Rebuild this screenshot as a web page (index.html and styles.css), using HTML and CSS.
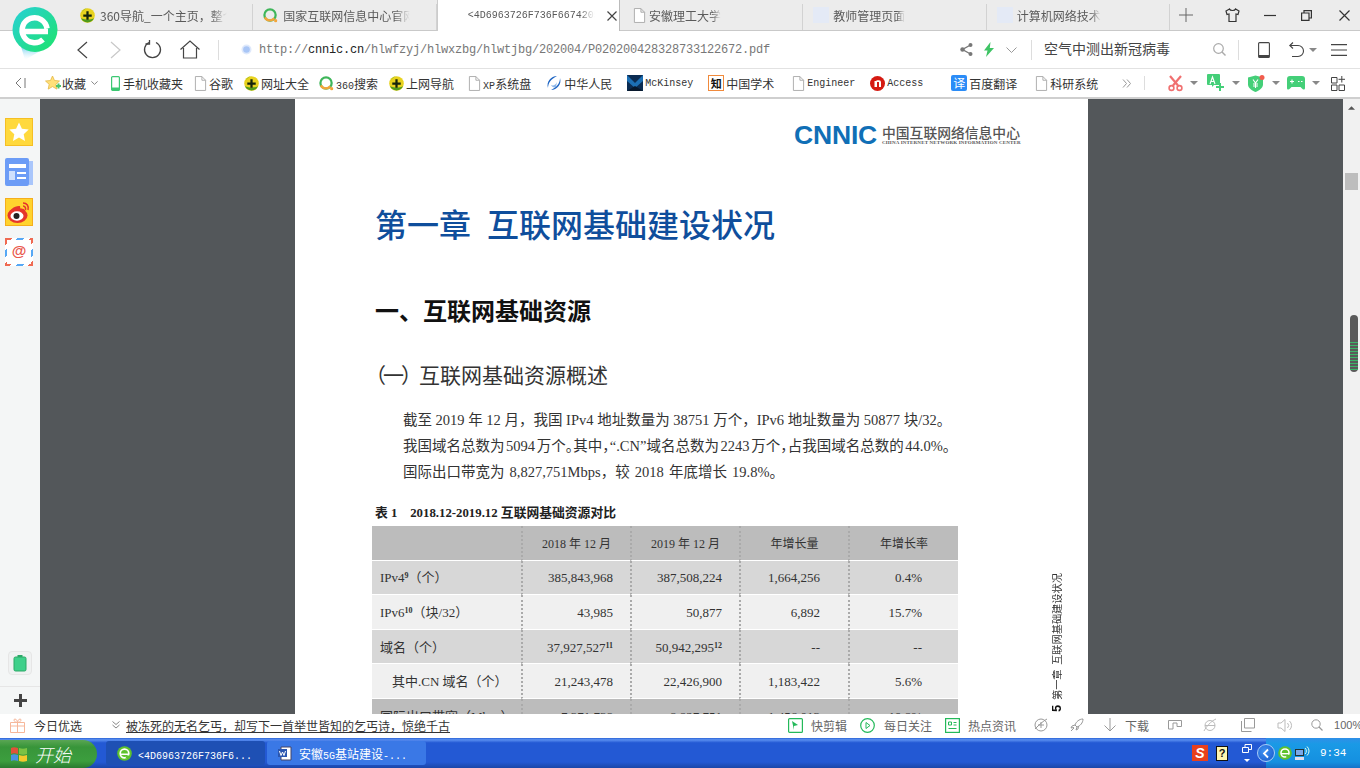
FILE: index.html
```html
<!DOCTYPE html>
<html lang="zh-CN">
<head>
<meta charset="utf-8">
<title>PDF</title>
<link rel="stylesheet" href="styles.css">
</head>
<body>
<svg class="defs" width="0" height="0">
  <defs>
    <symbol id="nav360" viewBox="0 0 16 16"><circle cx="8" cy="8" r="7.8" fill="#e8d21e"/><path d="M1 11a7.8 7.8 0 0 0 14 0c-3 1.500-9 2-14 0z" fill="#4f9a1c"/><path d="M2 5a7 7 0 0 1 6-5c-3 1-5 3-6 5z" fill="#7fb81f"/><path d="M6.800 3.500h2.400v3.300h3.300v2.400H9.200v3.300H6.800V9.200H3.500V6.800h3.300z" fill="#14240c"/></symbol>
    <symbol id="so360" viewBox="0 0 16 16"><circle cx="7.500" cy="7.500" r="6" fill="none" stroke="#3fb65a" stroke-width="2.400"/><path d="M2 10a6 6 0 0 0 10 1" fill="none" stroke="#f3a53a" stroke-width="2.400"/><circle cx="13.500" cy="13.500" r="1.700" fill="#f3a53a"/></symbol>
    <symbol id="doc" viewBox="0 0 14 16"><path d="M1.500.5h7l4 4v11h-11zM8.500.5v4h4" fill="#fff" stroke="#aaa"/></symbol>
    <symbol id="ie" viewBox="0 0 16 16"><circle cx="8" cy="8" r="7.800" fill="#5ec22c"/><circle cx="8" cy="8" r="4.600" fill="none" stroke="#fff" stroke-width="1.800"/><path d="M3.500 8h9v1.600h-9z" fill="#fff"/><path d="M10 10h4l-2 3-3 .5z" fill="#5ec22c"/></symbol>
    <symbol id="car" viewBox="0 0 8 4"><path d="M0 0h8L4 4z" fill="#888"/></symbol>
    <linearGradient id="lg" x1="0" y1="0" x2="1" y2="1"><stop offset="0" stop-color="#28d0d8"/><stop offset="1" stop-color="#1ee36a"/></linearGradient>
    <linearGradient id="lt" x1="0" y1="0" x2="0" y2="1"><stop offset="0" stop-color="#26b5e8"/><stop offset="1" stop-color="#fff" stop-opacity=".2"/></linearGradient>
  </defs>
</svg>
<div class="app">
  <header class="tabs">
    <div class="tab"><svg class="i15"><use href="#nav360"/></svg><span class="tabtext">360导航_一个主页，整个世界</span></div>
    <div class="tab"><svg class="i15"><use href="#so360"/></svg><span class="tabtext">国家互联网信息中心官网首页</span></div>
    <div class="tab active"><span class="tabtext mono-t">&lt;4D6963726F736F6674205733</span><svg class="close" viewBox="0 0 10 10"><path d="M.5.5l9 9M9.500.5l-9 9" stroke="#444" fill="none" stroke-width="1.200"/></svg></div>
    <div class="tab"><svg class="i15 pad1"><use href="#doc"/></svg><span class="tabtext">安徽理工大学</span></div>
    <div class="tab"><span class="blank"></span><span class="tabtext">教师管理页面</span></div>
    <div class="tab last"><span class="blank"></span><span class="tabtext">计算机网络技术</span></div>
    <div class="winbtns">
      <svg class="w14" viewBox="0 0 14 14"><path d="M7 0v14M0 7h14" stroke="#666" fill="none"/></svg>
      <svg class="w15 ml32" viewBox="0 0 15 14"><path d="M4.500 1L1 3l1 3.500 2-.5v7.500h7V6l2 .5L14 3l-3.500-2c-.5 2-5.500 2-6 0z" stroke="#333" fill="none" stroke-width="1.200"/></svg>
      <svg class="w12 ml24" viewBox="0 0 12 12"><path d="M0 6.500h12" stroke="#333" fill="none" stroke-width="1.200"/></svg>
      <svg class="w11 ml25" viewBox="0 0 11 11"><path d="M.6 3h7.400v7.400H.6zM3 3V.6h7.400V8H8" stroke="#333" fill="none" stroke-width="1.200"/></svg>
      <svg class="w11 ml27" viewBox="0 0 11 11"><path d="M.5.5l10 10M10.500.5l-10 10" stroke="#333" fill="none" stroke-width="1.200"/></svg>
    </div>
  </header>

  <nav class="toolbar">
    <svg class="w12h18" viewBox="0 0 12 18"><path d="M11 1L2 9l9 8" stroke="#444" fill="none" stroke-width="1.200"/></svg>
    <svg class="w12h18 ml22" viewBox="0 0 12 18"><path d="M1 1l9 8-9 8" stroke="#c8c8c8" fill="none" stroke-width="1.200"/></svg>
    <svg class="w19 ml21" viewBox="0 0 19 19"><path d="M6 2.500a8 8 0 1 0 7 0" stroke="#444" fill="none" stroke-width="1.300"/><path d="M6.500 0v4H2.500" stroke="#444" fill="none" stroke-width="1.300"/></svg>
    <svg class="w20 ml18" viewBox="0 0 20 19"><path d="M.5 9.500L10 1l9.500 8.500M3.500 8v10h13V8" stroke="#444" fill="none" stroke-width="1.200"/></svg>
    <span class="tsep ml18"></span>
    <svg class="i11 ml22" viewBox="0 0 11 11"><circle cx="5.500" cy="5.500" r="5" fill="#dfe9fb"/><circle cx="5.500" cy="5.500" r="3.300" fill="#a9c6f6"/></svg>
    <div class="url"><span class="gray">http://</span>cnnic.cn<span class="gray">/hlwfzyj/hlwxzbg/hlwtjbg/202004/P020200428328733122672.pdf</span></div>
    <svg class="w13" viewBox="0 0 13 13"><path d="M10.500 2L2.500 6.500l8 4.500" stroke="#777" fill="none" stroke-width="1.400"/><circle cx="10.500" cy="2" r="2" fill="#777"/><circle cx="2.500" cy="6.500" r="2.200" fill="#777"/><circle cx="10.500" cy="11" r="2" fill="#777"/></svg>
    <svg class="w10 ml11" viewBox="0 0 10 15"><path d="M6.500 0L0 8.500h3.500L2 15l8-9H5.800z" fill="#3fc465"/></svg>
    <svg class="w11h6 ml12" viewBox="0 0 11 6"><path d="M.5.500L5.500 5.500 10.500.5" stroke="#999" fill="none"/></svg>
    <span class="tsep ml14"></span>
    <div class="search">空气中测出新冠病毒</div>
    <svg class="w13" viewBox="0 0 13 13"><circle cx="5.500" cy="5.500" r="4.800" stroke="#aaa" fill="none" stroke-width="1.200"/><path d="M9 9l3.500 3.500" stroke="#aaa" stroke-width="1.400"/></svg>
    <span class="tsep ml12"></span>
    <svg class="w12h16 ml19" viewBox="0 0 12 16"><path d="M1.600.600h8.800c.6 0 1 .4 1 1v12.800c0 .6-.4 1-1 1H1.600c-.6 0-1-.4-1-1V1.600c0-.6.4-1 1-1z" fill="none" stroke="#444" stroke-width="1.100"/><path d="M1 13h10v2.500H1z" fill="#444"/></svg>
    <svg class="w15h16 ml19" viewBox="0 0 15 16"><path d="M4 .5L.8 3.500 4 6.500M1 3.500h8a5.500 5.500 0 0 1 0 11H3" stroke="#444" fill="none" stroke-width="1.100"/></svg>
    <svg class="car ml5"><use href="#car"/></svg>
    <svg class="w16h12 ml14" viewBox="0 0 16 12"><path d="M0 .6h16M0 6h16M0 11.400h16" stroke="#444" fill="none" stroke-width="1.100"/></svg>
  </nav>

  <nav class="bookmarks">
    <svg class="w11 bk-collapse" viewBox="0 0 11 12"><path d="M6 1L1 6l5 5M10 1v10" stroke="#777" fill="none"/></svg>
    <div class="bm star"><svg class="i16" viewBox="0 0 16 16"><path d="M7.500 1l2 4.500 5 .5-3.700 3.300 1 4.800-4.300-2.500-4.300 2.500 1-4.800L.5 6l5-.5z" fill="#ffe07a" stroke="#e5b843" stroke-width=".8"/><path d="M11 11h5M13.500 8.500v5" stroke="#4cc46c" stroke-width="2"/></svg><span>收藏</span></div>
    <svg class="w7 bm-chev" viewBox="0 0 7 4"><path d="M.4.4l3.100 3 3.100-3" stroke="#888" fill="none"/></svg>
    <div class="bm bm-phone"><svg class="w9h15" viewBox="0 0 9 15"><rect x=".6" y=".6" width="7.800" height="13.800" rx="1" fill="#fff" stroke="#3cc873" stroke-width="1.200"/><path d="M1 11.500h7v3H1z" fill="#3cc873"/></svg><span>手机收藏夹</span></div>
    <div class="bm g11"><svg class="dc"><use href="#doc"/></svg><span>谷歌</span></div>
    <div class="bm g11"><svg class="i15"><use href="#nav360"/></svg><span>网址大全</span></div>
    <div class="bm g10"><svg class="i15"><use href="#so360"/></svg><span><b class="lat">360</b>搜索</span></div>
    <div class="bm g11"><svg class="i15"><use href="#nav360"/></svg><span>上网导航</span></div>
    <div class="bm g14"><svg class="dc"><use href="#doc"/></svg><span><b class="lat">XP</b>系统盘</span></div>
    <div class="bm g15"><svg class="i16" viewBox="0 0 16 16"><path d="M11 1C5 1 0 7 2 13c0-5 3-9 9-12z" fill="#1f66c4"/><path d="M5 15c6 0 11-6 9-12 0 5-3 9-9 12z" fill="#1f66c4"/><path d="M5 10c2 1 5 0 6-3l-1 5c-2 1-4 0-5-2z" fill="#8fb8ea"/></svg><span>中华人民</span></div>
    <div class="bm g15"><svg class="i16" viewBox="0 0 16 16"><path d="M0 0h16v16H0z" fill="#0b2c52"/><path d="M0 0l8 8 8-8v6L8 13 0 6z" fill="#1c6fb4"/><path d="M0 16l8-5 8 5z" fill="#08182c"/></svg><span class="lat">McKinsey</span></div>
    <div class="bm g15"><span class="zhi">知</span><span>中国学术</span></div>
    <div class="bm g18"><svg class="dc"><use href="#doc"/></svg><span class="lat">Engineer</span></div>
    <div class="bm g15"><svg class="i15" viewBox="0 0 15 15"><circle cx="7.500" cy="7.500" r="7.500" fill="#d51a12"/><path d="M4.500 11V5h2v-.8h2.500a2 2 0 0 1 2 2V11H9V6H7v5z" fill="#fff"/></svg><span class="lat">Access</span></div>
    <div class="bm g28"><span class="yi">译</span><span>百度翻译</span></div>
    <div class="bm g18"><svg class="dc"><use href="#doc"/></svg><span>科研系统</span></div>
    <svg class="w10 ml24" viewBox="0 0 10 9"><path d="M1 .5l3.500 4L1 8.500M5 .5l3.500 4-3.500 4" stroke="#999" fill="none"/></svg>
    <span class="bsep"></span>
    <svg class="i15 ml23" viewBox="0 0 15 15"><path d="M2 0l8 9.500M13 0L5 9.500" stroke="#f07070" stroke-width="2.200"/><circle cx="3.500" cy="12" r="2.400" fill="none" stroke="#f07070" stroke-width="1.600"/><circle cx="11.500" cy="12" r="2.400" fill="none" stroke="#f07070" stroke-width="1.600"/></svg>
    <svg class="car ml7"><use href="#car"/></svg>
    <svg class="i18 ml9" viewBox="0 0 18 18"><path d="M1 0h11a1 1 0 0 1 1 1v10H7l-2 2v-2H1a1 1 0 0 1-1-1V1a1 1 0 0 1 1-1z" fill="#44cf78"/><path d="M3 10l2.500-7L8 10M4 7.500h3" stroke="#fff" fill="none" stroke-width="1.100"/><path d="M13 9v8M9 13h8" stroke="#44cf78" stroke-width="2"/></svg>
    <svg class="car ml7"><use href="#car"/></svg>
    <div class="shield ml8"><svg class="w17" viewBox="0 0 17 17"><path d="M0 2.500L7.500.5l7.500 2v7c0 3.500-4 6-7.500 7.500C4 15.500 0 13 0 9.500z" fill="#44cf78"/><path d="M5 4.500l2.500 3.500L10 4.500M7.500 8v5M5 9h5M5 11h5" stroke="#fff" fill="none" stroke-width="1.100"/><circle cx="14" cy="2.500" r="2.500" fill="#f25c4d"/></svg></div>
    <svg class="car ml7"><use href="#car"/></svg>
    <svg class="w18 ml7" viewBox="0 0 18 15"><path d="M3 0h12a3 3 0 0 1 3 3v9c0 2-2 2-3 .5L13.500 11h-9L3 12.500C2 14 0 14 0 12V3a3 3 0 0 1 3-3z" fill="#44cf78"/><path d="M3 5.500h4M5 3.500v4M11 5.500h1.500M14 5.500h1.500" stroke="#fff" stroke-width="1.100"/></svg>
    <svg class="car ml7"><use href="#car"/></svg>
    <svg class="i15 ml11" viewBox="0 0 15 15"><path d="M.5 1.500h5.500V7H.5zM.5 9h5.500v5.500H.5zM8 9h5.500v5.500H8zM10.800 0v6.500M7.500 3.300h6.500" stroke="#444" fill="none"/></svg>
  </nav>

  <main class="main">
    <aside class="side">
      <div class="sideicons">
        <svg class="i28" viewBox="0 0 28 28"><rect x=".5" y=".5" width="27" height="27" fill="#ffd93d" stroke="#f5bf24"/><path d="M14 4.500l2.900 6.200 6.800.8-5 4.700 1.300 6.800-6-3.400-6 3.400 1.300-6.800-5-4.700 6.800-.8z" fill="#fff"/></svg>
        <svg class="i28" viewBox="0 0 28 28"><path d="M24 3h4v24h-4z" fill="#a9c6fb"/><rect width="24" height="28" rx="2" fill="#6c9cf6"/><path d="M4 6h17v4H4z" fill="#fff"/><path d="M4 13h6v9H4z" fill="#cfe0fd"/><path d="M12 14h9v2h-9zM12 19h9v2h-9z" fill="#fff"/></svg>
        <svg class="i28" viewBox="0 0 28 28"><rect x=".5" y=".5" width="27" height="27" fill="#ffd32e" stroke="#f5ae1c"/><ellipse cx="12.500" cy="17.500" rx="10" ry="7.500" fill="#e5352b"/><path d="M3 17c1-5 6-9 11-9 2 0 1 2 1 3 4-1 6 1 5 4" fill="#e5352b"/><ellipse cx="12" cy="18" rx="6.500" ry="4.700" fill="#fff"/><circle cx="11.500" cy="18" r="3" fill="#222"/><path d="M18 5c4 0 6 3 5 7M18 8c2 0 3 2 2.500 4" stroke="#e5352b" fill="none" stroke-width="1.500"/></svg>
        <div class="mail"><span>@</span></div>
      </div>
      <div class="sidebottom">
        <div class="clipcard"><svg class="w12h16" viewBox="0 0 12 16"><path d="M3.500 0h5v2h-5z" fill="#2aa866"/><rect y="2" width="12" height="14" rx="1.500" fill="#3ed08a" stroke="#2aa866"/></svg></div>
        <div class="plus"><svg class="i13" viewBox="0 0 13 13"><path d="M6.500 0v13M0 6.500h13" stroke="#444" stroke-width="3"/></svg></div>
      </div>
    </aside>
    <section class="pdf">
      <article class="page">
        <div class="col">
          <div class="logo">
            <span class="cnnic">CNNIC</span>
            <div class="logotext"><span class="lcn">中国互联网络信息中心</span><span class="len">CHINA INTERNET NETWORK INFORMATION CENTER</span></div>
          </div>
          <h1>第一章&nbsp;&nbsp;互联网基础建设状况</h1>
          <h2>一、互联网基础资源</h2>
          <h3><span class="h3num">（一）</span>互联网基础资源概述</h3>
          <p class="para">截至 2019 年 12 月，我国 IPv4 地址数量为 38751 万个，IPv6 地址数量为 50877 块/32。<br><span class="ln2">我国域名总数为 5094 万个<span class="tp">。</span>其中<span class="tp">，</span>“.CN”域名总数为 2243 万个<span class="tp">，</span>占我国域名总数的 44.0%。</span><br><span class="ln3">国际出口带宽为 8,827,751Mbps，较 2018 年底增长 19.8%。</span></p>
          <div class="cap">表 1&nbsp;&nbsp;&nbsp;&nbsp;2018.12-2019.12 互联网基础资源对比</div>
          <table class="tbl">
            <thead>
              <tr><th class="c1"></th><th class="c2">2018 年 12 月</th><th class="c3">2019 年 12 月</th><th class="c4">年增长量</th><th class="c5">年增长率</th></tr>
            </thead>
            <tbody>
              <tr class="dk"><td class="c1">IPv4<sup>9</sup>（个）</td><td class="c2">385,843,968</td><td class="c3">387,508,224</td><td class="c4">1,664,256</td><td class="c5">0.4%</td></tr>
              <tr class="lt"><td class="c1">IPv6<sup>10</sup>（块/32）</td><td class="c2">43,985</td><td class="c3">50,877</td><td class="c4">6,892</td><td class="c5">15.7%</td></tr>
              <tr class="dk"><td class="c1">域名（个）</td><td class="c2">37,927,527<sup>11</sup></td><td class="c3">50,942,295<sup>12</sup></td><td class="c4">--</td><td class="c5">--</td></tr>
              <tr class="lt"><td class="c1 ind">其中.CN 域名（个）</td><td class="c2">21,243,478</td><td class="c3">22,426,900</td><td class="c4">1,183,422</td><td class="c5">5.6%</td></tr>
              <tr class="gr"><td class="c1">国际出口带宽（Mbps）</td><td class="c2">7,371,738</td><td class="c3">8,827,751</td><td class="c4">1,456,013</td><td class="c5">19.8%</td></tr>
            </tbody>
          </table>
        </div>
        <div class="running"><span class="num">5</span><span class="rt">第一章&nbsp;&nbsp;互联网基础建设状况</span></div>
      </article>
    </section>
    <aside class="scroll">
      <svg class="uparrow" viewBox="0 0 8 4"><path d="M0 4h8L4 0z" fill="#555"/></svg>
      <div class="thumb"></div>
    </aside>
    <div class="pill"><span></span></div>
  </main>

  <footer class="status">
    <svg class="i15 giftic" viewBox="0 0 15 15"><path d="M.5 4.500h14v10H.5zM.5 8h14M7.500 4.500v10" stroke="#f6b79a" fill="#fff"/><path d="M7.500 4.500C4 4.500 3 1 5 1s2.500 3.500 2.500 3.500S8 1 10 1s1 3.500-2.500 3.500z" stroke="#f6b79a" fill="none"/></svg>
    <span class="today">今日优选</span>
    <svg class="w8 ml30" viewBox="0 0 8 8"><path d="M.5.500l3.500 3 3.500-3M.5 4l3.500 3 3.500-3" stroke="#888" fill="none"/></svg>
    <a class="headline">被冻死的无名乞丐，却写下一首举世皆知的乞丐诗，惊绝千古</a>
    <div class="stat-right">
      <svg class="i15" viewBox="0 0 15 15"><rect x=".6" y=".6" width="13.800" height="13.800" rx="1" fill="none" stroke="#24b95a" stroke-width="1.200"/><path d="M4 3l6 4-4 1v4z" fill="#24b95a"/></svg>
      <span class="st ml8">快剪辑</span>
      <svg class="i15 ml13" viewBox="0 0 15 15"><circle cx="7.500" cy="7.500" r="6.800" fill="none" stroke="#24b95a" stroke-width="1.200"/><path d="M6 4.500l4 3-4 3z" fill="none" stroke="#24b95a"/></svg>
      <span class="st ml9">每日关注</span>
      <svg class="i15 ml13" viewBox="0 0 15 15"><rect x=".6" y=".6" width="13.800" height="13.800" fill="none" stroke="#24b95a" stroke-width="1.200"/><path d="M3.500 4h3v3h-3zM8.500 4.500h3M8.500 7h3M3.500 10.500h8" stroke="#24b95a" fill="none"/></svg>
      <span class="st ml8">热点资讯</span>
      <svg class="i14 ml18" viewBox="0 0 14 14"><circle cx="7" cy="7" r="6" fill="none" stroke="#999"/><path d="M7 4v6M4 7h6M1 11C5 7 9 3 13 1" stroke="#999" fill="none"/></svg>
      <svg class="i14 ml22" viewBox="0 0 14 14"><path d="M13 1c-4 0-7 3-8 6l2 2c3-1 6-4 6-8zM5 7L2 8l-1 2 3-.5M7 9l-1 3 2-1 .5-3M1 13l3-3" stroke="#999" fill="none"/></svg>
      <svg class="i14 ml19" viewBox="0 0 14 14"><path d="M7 0v13M1.500 7.500L7 13l5.500-5.500" stroke="#999" fill="none"/></svg>
      <span class="st ml8">下载</span>
      <svg class="i14 ml19" viewBox="0 0 14 14"><path d="M.5 2.500h13v6H9V5H5v6H.5z" stroke="#999" fill="none"/></svg>
      <svg class="i14 ml21" viewBox="0 0 14 14"><ellipse cx="7" cy="7.500" rx="5" ry="5" fill="none" stroke="#bbb"/><path d="M2 7.500h10M1 13C3 9 8 3 13 1" stroke="#bbb" fill="none"/></svg>
      <svg class="i14 ml24" viewBox="0 0 14 14"><path d="M3.500 10V.5h10V10zM.5 3v10.500h10" stroke="#999" fill="none"/></svg>
      <svg class="i15 ml22" viewBox="0 0 15 15"><path d="M1 5h3l4-3.500v12L4 10H1zM10.500 5a3.500 3.500 0 0 1 0 5M12.500 3a6 6 0 0 1 0 9" stroke="#bbb" fill="none"/></svg>
      <svg class="i12 ml19" viewBox="0 0 12 12"><circle cx="5" cy="5" r="4.200" stroke="#999" fill="none"/><path d="M8 8l3.500 3.500" stroke="#999" stroke-width="1.300"/></svg>
      <span class="zoomval">100%</span>
    </div>
  </footer>

  <footer class="taskbar">
    <div class="start">
      <svg class="i18" viewBox="0 0 18 18"><path d="M1 3c2-1 4-1 7 0v6c-3-1-5-1-7 0z" fill="#e0523a"/><path d="M9 3c3 1 5 1 8 0v6c-3 1-5 1-8 0z" fill="#7cc244"/><path d="M1 10c2-1 4-1 7 0v6c-3-1-5-1-7 0z" fill="#4a90e2"/><path d="M9 10c3 1 5 1 8 0v6c-3 1-5 1-8 0z" fill="#f4c92c"/></svg>
      <span class="starttxt">开始</span>
    </div>
    <div class="tbtn on"><svg class="i15"><use href="#ie"/></svg><span class="tbt"><b class="lat">&lt;4D6963726F736F6...</b></span></div>
    <div class="tbtn"><svg class="i15" viewBox="0 0 15 15"><path d="M3 1h10v13H3z" fill="#fff" stroke="#446"/><path d="M0 3h9v8H0z" fill="#2a56b0"/><path d="M1.500 5l1.500 4.500L4.500 6 6 9.500 7.500 5" stroke="#fff" fill="none"/></svg><span class="tbt">安徽<b class="lat">5G</b>基站建设<b class="lat">-...</b></span></div>
    <div class="tray-left">
      <span class="sogou">S</span>
      <span class="help">?</span>
      <div class="trayflip"><svg class="w10" viewBox="0 0 10 9"><path d="M.5 3.500h6v5h-6zM3 3.500V.5h6.500v5H7" stroke="#fff" fill="none"/></svg><svg class="w6h3" viewBox="0 0 6 3"><path d="M0 0h6L3 3z" fill="#fff"/></svg></div>
    </div>
    <div class="tray">
      <span class="backbtn"><svg class="w6h9" viewBox="0 0 6 9"><path d="M5 .5L1 4.500l4 4" stroke="#fff" stroke-width="1.800" fill="none"/></svg></span>
      <svg class="i15 trayie"><use href="#ie"/></svg>
      <svg class="i15 trayic" viewBox="0 0 15 15"><path d="M0 3h9v7H0z" fill="#233" /><path d="M1 4h7v5H1z" fill="#7aa8e8"/><path d="M0 11h9v3H0z" fill="#dde"/><path d="M10 2a4 4 0 0 1 0 6M12 .5a6 6 0 0 1 0 9" stroke="#dfe" fill="none"/></svg>
      <span class="clock">9:34</span>
    </div>
  </footer>
  <svg class="brand" viewBox="0 0 46 54">
    <path d="M8 36L13 53 38 38z" fill="url(#lt)"/>
    <circle cx="23" cy="22.500" r="22.500" fill="url(#lg)"/>
    <path d="M10 24.500h26M35 21.500a12.500 12.500 0 1 0-4 11" fill="none" stroke="#fff" stroke-width="5.500"/>
  </svg>
</div>
</body>
</html>
```

FILE: styles.css
```css
* { box-sizing: border-box; }
html, body { margin: 0; padding: 0; height: 100%; overflow: hidden; }
body { font-family: "Noto Sans CJK SC", "Liberation Sans", sans-serif; font-size: 12px; color: #444; background: #fff; }
.defs { position: absolute; }
svg { display: block; flex: none; overflow: visible; }
.app { position: relative; width: 1360px; height: 768px; display: flex; flex-direction: column; overflow: hidden; }

.i11 { width: 11px; height: 11px; } .i12 { width: 12px; height: 12px; } .i13 { width: 13px; height: 13px; }
.i14 { width: 14px; height: 14px; } .i15 { width: 15px; height: 15px; } .i16 { width: 16px; height: 16px; }
.i18 { width: 18px; height: 18px; } .i28 { width: 28px; height: 28px; } .dc { width: 13px; height: 15px; }
.w7 { width: 7px; height: 4px; } .w8 { width: 8px; height: 8px; } .w9h15 { width: 9px; height: 15px; }
.w10 { width: 10px; height: 15px; } .w11 { width: 11px; height: 11px; } .w12 { width: 12px; height: 12px; }
.w13 { width: 13px; height: 13px; } .w14 { width: 14px; height: 14px; } .w15 { width: 15px; height: 14px; }
.w17 { width: 17px; height: 17px; } .w18 { width: 18px; height: 15px; } .w19 { width: 19px; height: 19px; }
.w20 { width: 20px; height: 19px; } .w12h18 { width: 12px; height: 18px; } .w12h16 { width: 12px; height: 16px; }
.w15h16 { width: 15px; height: 16px; } .w16h12 { width: 16px; height: 12px; } .w11h6 { width: 11px; height: 6px; }
.w6h3 { width: 6px; height: 3px; } .w6h9 { width: 6px; height: 9px; }
.car { width: 8px; height: 4px; }
.ml5 { margin-left: 5px; } .ml6 { margin-left: 6px; } .ml7 { margin-left: 7px; } .ml8 { margin-left: 8px; }
.ml9 { margin-left: 9px; } .ml10 { margin-left: 10px; } .ml11 { margin-left: 11px; } .ml12 { margin-left: 12px; }
.ml13 { margin-left: 13px; } .ml14 { margin-left: 14px; } .ml18 { margin-left: 18px; } .ml19 { margin-left: 19px; }
.ml20 { margin-left: 20px; } .ml21 { margin-left: 21px; } .ml22 { margin-left: 22px; } .ml23 { margin-left: 23px; } .ml24 { margin-left: 24px; }
.ml25 { margin-left: 25px; } .ml27 { margin-left: 27px; } .ml30 { margin-left: 30px; } .ml32 { margin-left: 32px; }

/* tab strip */
.tabs { height: 31px; flex: none; display: flex; padding-left: 70px; background: #ececec; border-bottom: 1px solid #c9c9c9; }
.tab { width: 183.33px; height: 30px; display: flex; align-items: center; gap: 5px; padding-left: 10px; position: relative; }
.tab::after { content: ""; position: absolute; right: 0; top: 4px; bottom: 0; width: 1px; background: #d2d2d2; }
.tab.active { height: 31px; background: #fff; padding-left: 30px; border-left: 1px solid #ccc; border-right: 1px solid #bbb; }
.tab.active::after { display: none; }
.tabtext { color: #5a5a5a; white-space: nowrap; overflow: hidden; max-width: 127px;
  -webkit-mask-image: linear-gradient(90deg, #000 88%, transparent 100%); mask-image: linear-gradient(90deg, #000 88%, transparent 100%); }
.mono-t { font-family: "Liberation Mono", monospace; font-size: 10px; max-width: 127px; }
.close { width: 10px; height: 10px; margin-left: 7px; }
.pad1 { width: 13px; margin-left: 3px; margin-right: -2px; }
.blank { width: 16px; height: 16px; background: #e4eaf6; margin-right: -1px; flex: none; }
.winbtns { display: flex; align-items: center; margin-left: 9px; height: 30px; }

/* toolbar */
.toolbar { height: 38px; flex: none; display: flex; align-items: center; padding: 0 13px 0 76px; background: #fff; border-bottom: 1px solid #e2e2e2; }
.tsep { width: 1px; height: 20px; background: #ddd; flex: none; }
.url { flex: 1; margin-left: 7px; font-family: "Liberation Mono", monospace; font-size: 12px; letter-spacing: -.2px; color: #222; white-space: nowrap; }
.gray { color: #777; }
.search { width: 169px; margin: 0 0 3px 12px; font-size: 14px; color: #444; white-space: nowrap; }

/* bookmarks */
.bookmarks { height: 30px; flex: none; display: flex; align-items: center; padding-left: 15px; background: #fff; border-bottom: 2px solid #cfcfcf; }
.bm { display: flex; align-items: center; gap: 2px; color: #333; white-space: nowrap; flex: none; }
.bk-collapse { height: 12px; margin-right: 19px; }
.star { gap: 1px; }
.bm-chev { margin-left: 5px; }
.bm-phone { margin-left: 13px; gap: 3px; }
.g10 { margin-left: 10px; } .g11 { margin-left: 11px; } .g14 { margin-left: 14px; } .g15 { margin-left: 15px; }
.g18 { margin-left: 18px; } .g28 { margin-left: 28px; }
.lat { font-family: "Liberation Mono", monospace; font-size: 10px; font-weight: 400; letter-spacing: 0; }
.zhi { width: 16px; height: 16px; border: 1px solid #f08a3c; font: 700 11px/14px "Noto Sans CJK SC", sans-serif; color: #111; text-align: center; flex: none; }
.yi { width: 16px; height: 16px; border-radius: 2px; background: #2b8cf7; color: #fff; font: 400 12px/16px "Noto Sans CJK SC", sans-serif; text-align: center; flex: none; }
.bsep { width: 1px; height: 14px; background: #ddd; margin-left: 12px; }

/* main */
.main { flex: 1; min-height: 0; display: flex; position: relative; }
.side { width: 40px; flex: none; background: #f4f6f6; display: flex; flex-direction: column; justify-content: space-between; }
.sideicons { display: flex; flex-direction: column; gap: 12px; padding: 19px 0 0 5px; }
.mail { width: 28px; height: 28px; padding: 2px; background: repeating-linear-gradient(135deg, #ef6a52 0 5px, #fff 5px 9px, #56a8f5 9px 14px, #fff 14px 18px); }
.mail span { display: block; height: 24px; background: #fff; color: #e9574a; font: 700 15px/22px "Liberation Sans", sans-serif; text-align: center; }
.sidebottom { display: flex; flex-direction: column; align-items: center; }
.clipcard { width: 24px; height: 24px; margin-bottom: 11px; background: #f0f2f2; border: 1px solid #e6e6e6; border-radius: 4px; display: flex; align-items: center; justify-content: center; }
.plus { width: 40px; height: 28px; border-top: 1px solid #e6e6e6; display: flex; align-items: center; justify-content: center; }
.pdf { flex: 1; min-width: 0; background: #53575a; padding-left: 255px; overflow: hidden; }
.page { width: 793px; height: 100%; background: #fff; overflow: hidden; display: flex; align-items: flex-start; }
.col { width: 663px; flex: none; padding-left: 80px; }
.logo { display: flex; align-items: center; justify-content: flex-end; gap: 5px; height: 24px; margin-top: 24px; margin-right: -62px; }
.cnnic { font: 700 26.5px/24px "Liberation Sans", sans-serif; color: #106fb6; letter-spacing: -.2px; }
.logotext { display: flex; flex-direction: column; width: 138px; }
.lcn { font: 500 13.8px/15px "Noto Sans CJK SC", sans-serif; color: #555; white-space: nowrap; }
.len { font: 700 5px/6px "Liberation Serif", serif; color: #555; white-space: nowrap; letter-spacing: .17px; }
h1, h2, h3, p { margin: 0; }
h1 { margin-top: 59px; font: 500 32px/40px "Liberation Serif", "Noto Sans CJK SC", serif; color: #0f4e9c; white-space: nowrap; }
h2 { margin-top: 48px; font: 700 24px/32px "Noto Sans CJK SC", sans-serif; color: #111; white-space: nowrap; }
h3 { margin-top: 35px; font: 400 21px/30px "Liberation Serif", "Noto Sans CJK SC", serif; color: #333; white-space: nowrap; }
.h3num { margin-left: -10px; letter-spacing: -3px; }
.para { margin-top: 16px; padding-left: 28px; font: 400 14.5px/26px "Liberation Serif", "Noto Sans CJK SC", serif; color: #333; white-space: nowrap; }
.ln2 { word-spacing: -2px; }
.ln3 { word-spacing: 1.5px; }
.tp { letter-spacing: -7px; }
.cap { margin-top: 18px; font: 700 12.8px/20px "Liberation Serif", "Noto Sans CJK SC", serif; color: #222; white-space: nowrap; }
.tbl { margin: 3px 0 0 -3px; width: 586px; table-layout: fixed; border-collapse: separate; border-spacing: 0; font: 400 13px/20px "Liberation Serif", "Noto Sans CJK SC", serif; color: #333; }
.tbl th, .tbl td { height: 34.6px; padding: 2px 0 0; border-bottom: 1px solid #fff; white-space: nowrap; font-weight: 400; text-align: right; }
.tbl th { background: #bcbcbc; text-align: center; font-size: 12px; }
.c1 { width: 149px; text-align: left !important; padding-left: 8px !important; }
.c2, .c3, .c4, .c5 { border-left: 2px dotted #aaa; }
.c2 { width: 109px; padding-right: 17px !important; }
.c3 { width: 109px; padding-right: 17px !important; }
.c4 { width: 109px; padding-right: 28px !important; }
.c5 { width: 110px; padding-right: 36px !important; }
.tbl th.c2, .tbl th.c3, .tbl th.c4, .tbl th.c5 { padding-right: 0 !important; }
.ind { padding-left: 20px !important; }
.dk td { background: #d7d7d7; } .lt td { background: #f0f0f0; } .gr td { background: #bcbcbc; }
sup { font-size: 8px; font-weight: 700; line-height: 0; vertical-align: 4px; }
.running { margin: 464px 0 0 92px; width: 13px; height: 149px; display: flex; flex-direction: row; justify-content: flex-start; align-items: center; gap: 5px; writing-mode: vertical-rl; text-orientation: sideways; transform: rotate(180deg); }
.num { font: 900 13px/13px "Liberation Sans", sans-serif; color: #111; }
.rt { font: 400 10.2px/13px "Noto Sans CJK SC", sans-serif; color: #333; white-space: nowrap; }
.scroll { width: 17px; flex: none; background: #f1f1f1; padding: 7px 2px 0; }
.uparrow { width: 7px; height: 4px; margin: 0 0 0 3px; }
.thumb { width: 13px; height: 17px; margin-top: 63px; background: #bdbdbd; }
.pill { position: absolute; left: 1350px; top: 216px; width: 8px; height: 57px; border-radius: 4px; background: #5a5a5a; overflow: hidden; }
.pill span { display: block; margin-top: 27px; height: 28px; background: repeating-linear-gradient(#3cb568 0 1px, #5a5a5a 1px 3px); }

/* status */
.status { height: 24px; flex: none; display: flex; align-items: center; padding: 0 0 2px 10px; background: #fff; }
.today { margin-left: 9px; color: #333; white-space: nowrap; flex: none; }
.headline { margin-left: 6px; color: #333; text-decoration: underline; white-space: nowrap; flex: none; }
.stat-right { margin-left: 338px; display: flex; align-items: center; }
.st { color: #666; white-space: nowrap; }
.zoomval { margin-left: 11px; font-family: "Liberation Sans", sans-serif; font-size: 11px; color: #666; }

/* taskbar */
.taskbar { height: 30px; flex: none; display: flex; align-items: stretch; background: linear-gradient(#2a63d6 0, #5a8ff0 6%, #2359d4 16%, #2359d4 80%, #1a46a8 100%); }
.start { width: 97px; margin-top: 2px; flex: none; display: flex; align-items: center; gap: 7px; padding-left: 10px; border-radius: 0 14px 14px 0; background: linear-gradient(#5aa653, #38953a 25%, #3c9e3e 75%, #2a7a30); }
.starttxt { font: italic 300 18px/22px "Noto Sans CJK SC", sans-serif; color: #fff; }
.tbtn { width: 159px; height: 24px; margin: 3px 0 0 2px; flex: none; display: flex; align-items: center; gap: 6px; padding-left: 11px; border-radius: 3px; background: #3a78e6; }
.tbtn.on { margin-left: 9px; background: #1e50b4; }
.tbt { font-size: 12px; color: #fff; white-space: nowrap; }
.tray-left { flex: 1; display: flex; align-items: center; justify-content: flex-end; }
.sogou { width: 16px; height: 16px; background: #e8401c; color: #fff; font: italic 700 14px/16px "Liberation Sans", sans-serif; text-align: center; }
.help { width: 12px; height: 15px; margin-left: 8px; background: #fff6b0; border: 1px solid #111; color: #111; font: 700 11px/13px "Liberation Sans", sans-serif; text-align: center; }
.trayflip { margin: 0 14px 0 14px; display: flex; flex-direction: column; align-items: center; gap: 6px; }
.trayflip .w10 { height: 9px; }
.tray { width: 94px; flex: none; display: flex; align-items: center; background: linear-gradient(#2f8fe8, #1a9ae6 20%, #1590e0 80%, #1672c8); position: relative; padding-left: 12px; }
.backbtn { width: 18px; height: 18px; margin-left: -21px; margin-right: 3px; border-radius: 50%; background: radial-gradient(circle at 40% 40%, #3d92f2, #1856c8); border: 1px solid #a9cdf8; display: flex; align-items: center; justify-content: center; flex: none; }
.trayie { width: 14px; height: 14px; }
.trayic { margin-left: 3px; }
.clock { margin-left: 10px; color: #fff; font-family: "Liberation Mono", monospace; font-size: 11px; }

.brand { position: absolute; left: 12px; top: 7px; width: 46px; height: 54px; }
```
